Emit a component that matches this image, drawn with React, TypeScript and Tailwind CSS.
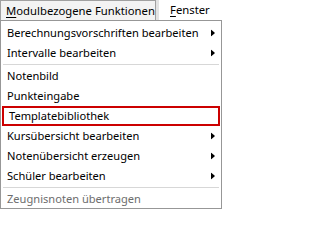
import React from "react"

type Item = { label: string; sub?: boolean; disabled?: boolean; selected?: boolean } | "sep"

const items: Item[] = [
  { label: "Berechnungsvorschriften bearbeiten", sub: true },
  { label: "Intervalle bearbeiten", sub: true },
  "sep",
  { label: "Notenbild" },
  { label: "Punkteingabe" },
  { label: "Templatebibliothek", selected: true },
  { label: "Kursübersicht bearbeiten", sub: true },
  { label: "Notenübersicht erzeugen", sub: true },
  { label: "Schüler bearbeiten", sub: true },
  "sep",
  { label: "Zeugnisnoten übertragen", disabled: true },
]

function Arrow() {
  return (
    <svg width="4" height="7" viewBox="0 0 4 7" className="absolute right-[5px] top-1/2 -translate-y-1/2">
      <path d="M0 0 L4 3.5 L0 7 Z" fill="#000" />
    </svg>
  )
}

export default function App() {
  return (
    <div
      className="w-[222px] h-[210px] bg-white text-[11.3px] text-black overflow-hidden whitespace-nowrap"
      style={{ fontFamily: '"Noto Sans", "Open Sans", sans-serif' }}
    >
      {/* menu bar */}
      <div className="flex h-[20px] bg-white">
        <div className="flex items-center h-[20px] pl-[5px] w-[156px] border border-b-0 border-[#a0a0a0] bg-[#f3f3f3]">
          <span className="leading-none">
            <span className="underline underline-offset-2">M</span>odulbezogene Funktionen
          </span>
        </div>
        <div className="w-[3px] bg-[#e3e3e3]" />
        <div className="flex items-center pl-[11px] h-[20px] flex-1">
          <span className="leading-none">
            <span className="underline underline-offset-2">F</span>enster
          </span>
        </div>
      </div>
      {/* dropdown */}
      <div className="w-[222px] h-[189px] border border-[#979797] bg-white pt-[2px] px-[1px] text-[11.1px]">
        {items.map((it, i) =>
          it === "sep" ? (
            <div key={i} className="h-[3px] flex items-center px-[1px]">
              <div className="h-px w-full bg-[#d7d7d7]" />
            </div>
          ) : (
            <div
              key={i}
              className={`relative h-[20px] flex items-center pl-[5px] leading-none ${
                it.selected ? "border-2 border-[#cc0000] pl-[3px]" : ""
              } ${it.disabled ? "text-[#6d6d6d]" : ""}`}
            >
              {it.label}
              {it.sub && <Arrow />}
            </div>
          )
        )}
      </div>
    </div>
  )
}
